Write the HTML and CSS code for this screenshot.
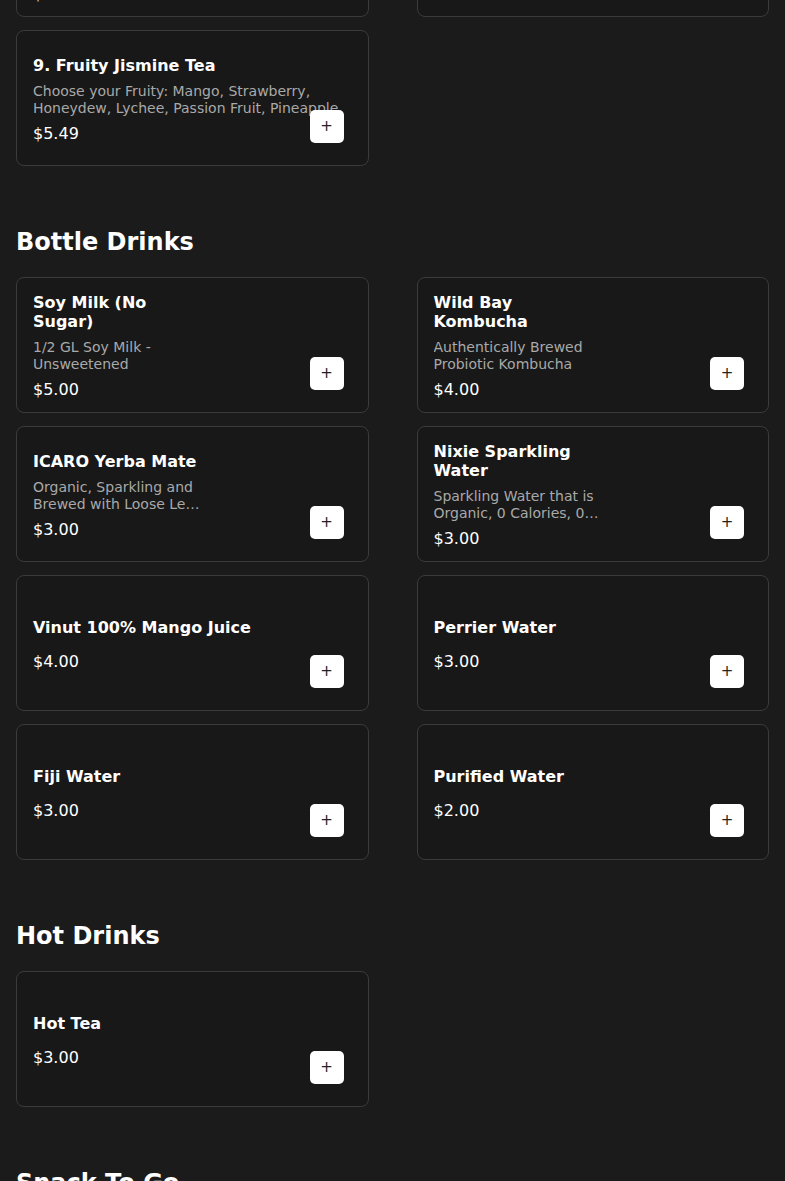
FILE: index.html
```html
<!DOCTYPE html>
<html lang="en">
<head>
  <meta charset="UTF-8">
  <meta name="viewport" content="width=device-width, initial-scale=1.0">
  <title>Menu</title>
  <link rel="stylesheet" href="styles.css">
</head>
<body>
  <main class="menu">
    <section class="section section-first">
      <div class="items">
        <div class="item">
          <div class="item-info">
            <div class="item-name">7. Passion Fruit Green Tea</div>
            <div class="item-desc">Green tea with passion fruit</div>
            <div class="item-price">$5.49</div>
          </div>
          <button class="add">+</button>
        </div>
        <div class="item">
          <div class="item-info">
            <div class="item-name">8. Lychee Black Tea</div>
            <div class="item-desc">Black tea with lychee</div>
            <div class="item-price">$5.49</div>
          </div>
          <button class="add">+</button>
        </div>
        <div class="item">
          <div class="item-info is-full">
            <div class="item-name">9. Fruity Jismine Tea</div>
            <div class="item-desc">Choose your Fruity: Mango, Strawberry, Honeydew, Lychee, Passion Fruit, Pineapple</div>
            <div class="item-price">$5.49</div>
          </div>
          <button class="add">+</button>
        </div>
      </div>
    </section>

    <section class="section">
      <h2 class="section-title">Bottle Drinks</h2>
      <div class="items">
        <div class="item">
          <div class="item-info">
            <div class="item-name">Soy Milk (No Sugar)</div>
            <div class="item-desc">1/2 GL Soy Milk - Unsweetened</div>
            <div class="item-price">$5.00</div>
          </div>
          <button class="add">+</button>
        </div>
        <div class="item">
          <div class="item-info">
            <div class="item-name">Wild Bay Kombucha</div>
            <div class="item-desc">Authentically Brewed Probiotic Kombucha</div>
            <div class="item-price">$4.00</div>
          </div>
          <button class="add">+</button>
        </div>
        <div class="item">
          <div class="item-info">
            <div class="item-name">ICARO Yerba Mate</div>
            <div class="item-desc">Organic, Sparkling and Brewed with Loose Leaf Yerba Mate</div>
            <div class="item-price">$3.00</div>
          </div>
          <button class="add">+</button>
        </div>
        <div class="item">
          <div class="item-info">
            <div class="item-name">Nixie Sparkling Water</div>
            <div class="item-desc">Sparkling Water that is Organic, 0 Calories, 0 Sweeteners</div>
            <div class="item-price">$3.00</div>
          </div>
          <button class="add">+</button>
        </div>
        <div class="item">
          <div class="item-info is-wide">
            <div class="item-name">Vinut 100% Mango Juice</div>
            <div class="item-desc"></div>
            <div class="item-price">$4.00</div>
          </div>
          <button class="add">+</button>
        </div>
        <div class="item">
          <div class="item-info is-wide">
            <div class="item-name">Perrier Water</div>
            <div class="item-desc"></div>
            <div class="item-price">$3.00</div>
          </div>
          <button class="add">+</button>
        </div>
        <div class="item">
          <div class="item-info is-wide">
            <div class="item-name">Fiji Water</div>
            <div class="item-desc"></div>
            <div class="item-price">$3.00</div>
          </div>
          <button class="add">+</button>
        </div>
        <div class="item">
          <div class="item-info is-wide">
            <div class="item-name">Purified Water</div>
            <div class="item-desc"></div>
            <div class="item-price">$2.00</div>
          </div>
          <button class="add">+</button>
        </div>
      </div>
    </section>

    <section class="section">
      <h2 class="section-title">Hot Drinks</h2>
      <div class="items">
        <div class="item">
          <div class="item-info is-wide">
            <div class="item-name">Hot Tea</div>
            <div class="item-desc"></div>
            <div class="item-price">$3.00</div>
          </div>
          <button class="add">+</button>
        </div>
      </div>
    </section>

    <section class="section">
      <h2 class="section-title">Snack To Go</h2>
    </section>
  </main>
</body>
</html>
```

FILE: styles.css
```css
* {
  box-sizing: border-box;
}

body {
  margin: 0;
  background-color: #1b1b1b;
  color: #fff;
  font-family: "DejaVu Sans", sans-serif;
  overflow: hidden;
}

.menu {
  padding: 0 16px;
}

/* page is scrolled: only the bottom of the first row shows */
.section-first {
  margin-top: -119px;
}

.section {
  padding-bottom: 62px;
}

.section-title {
  margin: 0 0 21px;
  font-size: 24px;
  line-height: 28px;
  font-weight: bold;
}

.items {
  display: grid;
  grid-template-columns: 1fr 1fr;
  column-gap: 48px;
  row-gap: 13px;
}

.item {
  position: relative;
  height: 136px;
  padding: 2px 16px 0;
  display: flex;
  align-items: center;
  background: #181818;
  border: 1px solid #3b3b3b;
  border-radius: 8px;
}

.item-info {
  display: flex;
  flex-direction: column;
  width: 170px;
}

.item-info.is-wide {
  width: 240px;
}

.item-info.is-full {
  width: 100%;
}

.item-name {
  font-size: 16px;
  line-height: 19px;
  font-weight: bold;
}

.item-desc {
  margin: 8px 0 7px;
  font-size: 14px;
  line-height: 17px;
  color: #a9a9a9;
  display: -webkit-box;
  -webkit-line-clamp: 2;
  -webkit-box-orient: vertical;
  overflow: hidden;
}

.item-price {
  font-size: 16px;
  line-height: 19px;
}

.add {
  position: absolute;
  right: 24px;
  bottom: 22px;
  width: 34px;
  height: 33px;
  padding: 0;
  border: none;
  border-radius: 5px;
  background: #fff;
  color: #222;
  font-family: "DejaVu Sans", sans-serif;
  font-size: 15px;
  line-height: 33px;
  cursor: pointer;
}
```
